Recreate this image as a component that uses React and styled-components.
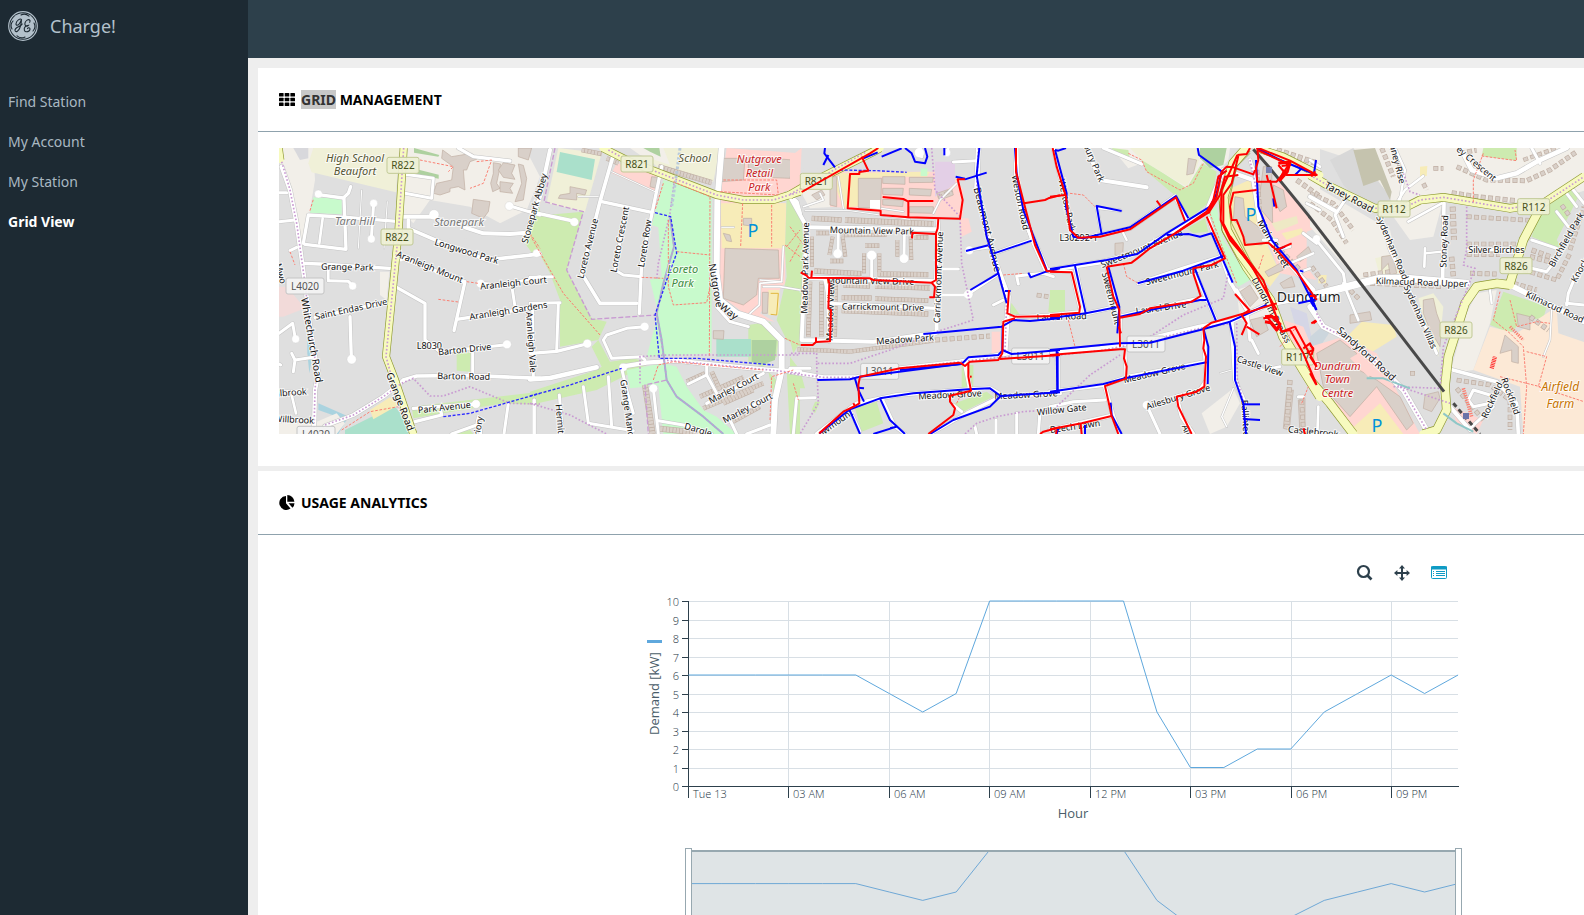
import { createGlobalStyle, styled } from 'styled-components';

const GlobalStyle = createGlobalStyle`
  * {
    box-sizing: border-box;
  }
  body {
    margin: 0;
    font-family: 'Noto Sans', 'Open Sans', sans-serif;
    font-size: 14px;
    background: #eeeeee;
  }
`;

const MENU = ['Find Station', 'My Account', 'My Station', 'Grid View'];

// Map colours
const GREY = '#dfdfdf';
const SAND = '#f2efe9';
const PARK = '#c8facc';
const GRASS = '#cdebb0';
const PITCH = '#aae0cb';
const SCHOOL = '#f0f0d8';
const RETAIL = '#ffd6d1';
const PARKING = '#f7ecb8';
const HOUSE = '#d9d0c9';
const WATER = '#aad3df';
const FOOT = '#fa8072';
const CYCLE = '#c99bd2';
const BRIDLE = '#2b2bff';

// The map is drawn in five tiles. Tile points are in thirds of a pixel, x is the tile's left edge.
const TILES = [
  {
    x: 0,
    areas: [
      [SAND, '27,24 130,24 135,120 110,270 95,300 60,160 27,60'],
      [SAND, '385,24 765,24 810,110 770,210 690,250 480,180 430,250 400,220'],
      [GREY, '440,250 480,180 600,200 700,255 770,215 775,290 430,300'],
      [SCHOOL, '130,24 388,24 378,157 125,97 115,70'],
      ['#d8d8dc', '70,24 115,24 115,55 90,60'],
      [PARK, '130,172 215,176 215,223 120,218'],
      ['#aed1a0', '432,24 508,45 505,50 432,38'],
      ['#aed1a0', '440,88 506,104 506,116 440,103'],
      ['#f2dad9', '27,440 50,440 105,505 40,530 27,530'],
      [WATER, '112,520 120,550 125,660 118,700 112,640'],
      [WATER, '145,790 225,825 235,830 205,882 195,882 215,835 145,810'],
      [GRASS, '775,270 810,200 810,345 790,345 765,310'],
      [GRASS, '560,638 603,638 600,695 560,692'],
      [GRASS, '425,800 810,755 810,795 700,790 430,835'],
      [SAND, '27,850 130,850 200,820 225,850 200,882 27,882'],
      [PITCH, '225,870 305,830 375,800 415,850 415,882 225,882'],
      [PARKING, '300,810 360,772 385,795 310,838'],
      [SAND, '330,395 358,395 350,480 330,465'],
      [GRASS, '540,882 600,870 610,882'],
      [HOUSE, '518,30 545,50 605,40 620,58 600,65 590,90 580,90 585,150 565,140 540,145 540,155 510,165 490,160 500,130 545,120 550,80 515,55'],
      [HOUSE, '670,68 692,72 680,130 690,145 668,155 662,130 670,100'],
      [HOUSE, '745,72 760,76 770,115 760,180 735,185 755,130'],
      [HOUSE, '700,68 735,75 725,100 735,118 700,112 685,90'],
      [HOUSE, '690,125 730,130 720,145 728,160 690,155'],
      [HOUSE, '745,24 785,24 775,60 745,50'],
      [HOUSE, '610,178 660,185 655,215 640,235 605,220'],
    ],
    roads: [
      [13, '35,80 60,150 80,250 105,430 120,560 135,650 145,700 135,750 132,870'],
      [9, '27,158 50,158'], [9, '27,245 75,240'], [9, '60,332 80,322'],
      [10, '100,310 115,225 230,232 390,245'],
      [10, '145,164 220,174 235,160 242,140'], [10, '222,176 228,328 105,313'], [8, '158,235 148,310'],
      [3, '275,150 265,325'], [3, '352,185 342,325'],
      [9, '311,190 304,296'],
      [10, '100,370 150,372 360,385'], [8, '175,390 175,422'], [9, '175,422 235,424 248,437'],
      [10, '135,532 355,485'], [10, '240,530 244,655'],
      [9, '27,580 68,550 76,596'], [9, '130,652 75,660 70,695'], [9, '75,660 65,640'],
      [9, '27,672 32,675'], [10, '30,757 105,752'], [8, '65,765 78,820'], [9, '27,838 120,840'],
      [9, '400,102 490,115 485,175 405,160'],
      [12, '400,230 490,230'], [12, '585,262 640,280 720,282 770,278'],
      [11, '415,240 415,265 520,310 650,360 810,342'],
      [9, '720,198 810,225'],
      [11, '385,350 580,425'], [10, '585,425 552,572'], [10, '560,538 810,500'],
      [10, '380,442 465,490 465,600 510,635'], [9, '630,430 700,435 810,410'], [9, '725,435 735,500'],
      [9, '510,635 710,614'], [11, '400,720 440,708 600,706 810,715'],
      [9, '608,638 608,700'], [9, '788,505 790,710'],
      [10, '430,805 620,792'], [10, '435,845 515,825 512,812'], [9, '715,790 702,882'], [9, '793,780 793,882'],
      [9, '545,882 620,855 625,830'], [9, '630,850 632,882'],
      [10, '565,24 610,50 720,63'],
      [12, '165,858 250,825 340,770 400,722'],
    ],
    main: [
      [20, '401,24 385,280 348,650 375,720 430,882'],
      [18, '27,24 32,60'],
    ],
    paths: [
      [CYCLE, 5, '5 6', '35,65 60,150 80,250 105,430 120,560 140,690 135,750 132,870'],
      [CYCLE, 5, '5 6', '401,24 385,280 348,650 362,700'],
      [CYCLE, 5, '5 6', '165,855 250,825 340,770 395,730 430,715 480,768 520,768 600,740 720,790 810,792'],
      [FOOT, 3, '8 5', '120,212 130,178'], [FOOT, 3, '8 5', '60,335 75,375'],
      [FOOT, 3, '8 5', '450,60 550,80 535,95'], [FOOT, 3, '8 5', '505,478 565,486'],
      [FOOT, 3, '8 5', '590,425 625,430'], [FOOT, 3, '8 5', '620,65 665,60 640,130 600,145'],
      [FOOT, 3, '8 5', '780,280 810,325'], [FOOT, 3, '8 5', '215,870 300,815 385,800 410,840'],
      [BRIDLE, 4, '9 5', '520,830 600,820 810,760'],
    ],
    circles: [[145, 162, 11], [311, 190, 11], [304, 297, 11], [248, 438, 11], [245, 658, 13], [77, 597, 11], [718, 198, 12], [492, 224, 14], [632, 431, 12], [711, 613, 12], [618, 792, 12], [390, 352, 12]],
    shields: [
      [399, 76, 'R822', 'R'], [381, 291, 'R822', 'R'], [105, 438, 'L4020', 'L'], [138, 883, 'L4020', 'L'],
    ],
    labels: [
      [255, 51, 'High School', 0, 'area'], [255, 92, 'Beaufort', 0, 'area'],
      [255, 240, 'Tara Hill', 0, 'place'], [567, 244, 'Stonepark', 0, 'place'],
      [590, 333, 'Longwood Park', 17, 'street'], [480, 380, 'Aranleigh Mount', 22, 'street'],
      [232, 380, 'Grange Park', 1, 'street'], [243, 506, 'Saint Endas Drive', -12, 'street'],
      [730, 428, 'Aranleigh Court', -6, 'street'], [715, 511, 'Aranleigh Gardens', -9, 'street'],
      [127, 600, 'Whitechurch Road', 80, 'big'], [478, 617, 'L8030', 0, 'street'],
      [584, 627, 'Barton Drive', -6, 'street'], [581, 708, 'Barton Road', 1, 'street'],
      [392, 784, 'Grange Road', 69, 'big'], [523, 801, 'Park Avenue', -6, 'street'],
      [785, 607, 'Aranleigh Vale', 86, 'street'], [792, 205, 'Stonepark Abbey', -74, 'street'],
      [66, 756, 'llbrook', -4, 'street'], [72, 838, 'Willbrook', 3, 'street'],
      [33, 400, 'Mwo', 75, 'street'], [624, 858, 'riory', -80, 'street'],
    ],
  },
  {
    x: 780,
    areas: [
      [GRASS, '45,225 160,215 110,390 185,535 230,545 205,600 90,620 90,480 60,400 0,290 20,225'],
      [GRASS, '0,755 200,690 215,680 185,620 205,600 240,665 310,655 360,670 200,750 0,795'],
      [SCHOOL, '85,24 215,40 165,215 50,190'],
      [PITCH, '90,36 195,58 185,120 80,96'],
      [RETAIL, '260,70 380,90 375,155 245,100'],
      [SCHOOL, '325,24 570,24 550,125 380,80 '],
      [SAND, '300,24 400,24 420,75 330,45'],
      ['#aed1a0', '340,24 388,24 392,50 360,35'],
      [PARK, '400,120 545,160 545,640 350,650 385,520 360,420 395,410 385,262 365,255 380,200'],
      [RETAIL, '590,24 810,40 810,150 760,160 720,180 570,165'],
      [RETAIL, '570,180 768,190 765,430 690,520 735,545 655,530 570,465'],
      [PARKING, '572,190 768,190 765,325 575,325'],
      [PARKING, '715,450 748,450 748,525 715,525'],
      [GRASS, '770,165 810,200 810,620 770,600 740,540 770,410 765,330'],
      [GRASS, '655,555 720,545 745,600 740,650 700,680 655,665'],
      ['#aed1a0', '665,600 740,600 735,660 700,672 665,665'],
      [PITCH, '559,597 663,597 663,650 559,650'],
      [PARK, '290,690 400,670 405,735 300,745'],
      [PARK, '400,670 440,680 470,740 520,810 560,830 620,882 400,882 385,735'],
      [GRASS, '715,695 745,725 740,780 725,740'],
      [GRASS, '770,690 810,690 810,882 780,882'],
      [HOUSE, '585,325 745,330 748,415 685,415 680,465 640,495 580,475'],
      [HOUSE, '640,235 665,235 665,258 640,255'],
      [HOUSE, '580,280 600,285 605,305 590,302'],
      [HOUSE, '655,50 790,60 780,115 655,110'],
      [HOUSE, '575,55 645,55 640,120 575,125'],
      [HOUSE, '697,457 715,457 712,520 697,520'],
      [HOUSE, '550,572 582,572 580,598 550,596'],
      [HOUSE, '120,140 170,150 165,165 140,160 140,180 85,175 90,165 120,160'],
      [HOUSE, '365,110 382,112 378,145 360,140'],
    ],
    roads: [
      [12, '60,30 30,170 0,250'], [10, '0,215 130,243'], [9, '0,345 20,340'], [9, '0,412 68,410'], [9, '0,490 90,488'],
      [9, '85,490 80,630'], [10, '0,640 80,634 170,612'],
      [11, '250,45 210,185 155,400 210,490 320,490'], [10, '215,185 365,217'],
      [10, '395,80 335,370 328,520'], [9, '285,220 255,390 280,405 335,410'],
      [9, '345,560 290,565 230,585 220,600 245,655 335,650 345,660'],
      [14, '0,718 60,714 200,682'], [13, '275,680 350,668 440,662 560,675 720,690 810,695'],
      [18, '575,24 562,180 560,400 570,480 620,520 700,545 755,600 755,690 735,780 730,882'],
      [9, '560,500 600,545 655,560'],
      [12, '770,160 800,185 810,220'],
      [9, '275,685 290,750 310,820'], [9, '88,765 95,850'], [9, '160,740 175,850 310,872'], [9, '235,710 245,860'],
      [9, '370,745 385,882'], [9, '385,842 460,855 545,882'],
      [9, '475,732 530,705 560,760'], [9, '530,670 530,705'], [9, '530,790 700,700'], [9, '590,835 720,770'],
      [9, '600,840 620,882'], [9, '650,882 720,855'],
      [3, '145,170 205,170'], [3, '245,95 375,155'], [4, '690,420 755,425'], [5, '700,440 750,440 810,450'],
      [3, '575,262 612,262'],
      [9, '12,780 12,882'],
      [5, '760,320 755,425 690,430 688,495 660,520'],
    ],
    main: [[20, '218,24 300,65 430,115 560,165 640,180 730,180 810,155']],
    paths: [
      [CYCLE, 5, '5 6', '235,30 300,65 430,115 560,165 640,180 730,180 810,155'],
      [CYCLE, 4, '15 6', '75,24 42,185 160,215 110,390 185,538 380,525 400,640 410,720 345,735 355,882'],
      [CYCLE, 5, '5 6', '432,130 420,220 385,370 380,420'],
      [CYCLE, 5, '5 6', '330,730 330,650 410,645 810,645'],
      [CYCLE, 5, '5 6', '400,660 560,675 720,690 810,700'],
      [CYCLE, 5, '5 6', '0,790 120,825 230,882'],
      ['#a3b3d0', 6, '0', '420,230 432,320 400,430 380,520 395,600 410,720 440,770 520,830 580,882'],
      [CYCLE, 4, '5 6', '420,230 432,320 400,430 380,520 395,600 410,720 440,770 520,830 580,882'],
      ['#b9c9d9', 9, '8 6', '450,24 440,100 425,200'],
      [FOOT, 3, '8 4', '430,125 540,170 538,650'], [FOOT, 3, '8 4', '415,240 415,440 430,495 530,488 540,440'],
      [FOOT, 3, '8 4', '440,335 540,345'], [FOOT, 3, '8 4', '335,412 400,415'],
      [FOOT, 3, '8 4', '0,285 100,460 210,585'], [FOOT, 3, '8 4', '400,130 375,210'],
      [FOOT, 3, '8 4', '370,720 385,675 430,665 700,690'], [FOOT, 3, '8 4', '725,195 725,320'], [FOOT, 3, '8 4', '638,190 632,318'],
      [FOOT, 3, '8 4', '580,120 740,120 745,165 570,155'], [FOOT, 3, '8 4', '765,315 810,350'], [FOOT, 3, '8 4', '770,320 810,270'],
      [FOOT, 3, '8 4', '765,595 810,615'], [FOOT, 3, '8 4', '720,840 725,710 790,690'],
      [BRIDLE, 4, '9 5', '375,218 422,230 440,340 410,420 375,525 388,655 500,655 730,675'],
      [BRIDLE, 4, '9 5', '0,768 120,735 275,685'],
      ['#e0b63d', 3, '0', '722,460 745,460 740,525 722,523'],
    ],
    houses: [
      [14, '155,30 215,42'], [14, '230,55 265,70'], [16, '385,80 545,128'],
      [14, '470,725 525,700'], [14, '510,770 640,712'], [14, '520,805 700,730'], [14, '580,790 670,750'], [14, '600,850 690,800'],
      [18, '345,735 368,882'], [18, '390,866 520,880'], [14, '545,695 570,750'],
    ],
    circles: [[133, 246, 12], [20, 340, 11], [344, 560, 12], [172, 611, 12], [280, 682, 11], [370, 745, 12]],
    shields: [[321, 72, 'R821', 'R']],
    labels: [
      [494, 52, 'School', 0, 'area'],
      [688, 56, 'Nutgrove', 0, 'shop'], [688, 97, 'Retail', 0, 'shop'], [688, 138, 'Park', 0, 'shop'],
      [458, 385, 'Loreto', 0, 'park'], [458, 426, 'Park', 0, 'park'],
      [172, 325, 'Loreto Avenue', -76, 'street'], [268, 298, 'Loreto Crescent', -79, 'street'],
      [343, 310, 'Loreto Row', -81, 'street'],
      [559, 436, 'Nutgrove', 80, 'big'], [598, 513, 'Way', 38, 'big'],
      [610, 744, 'Marley Court', -28, 'street'], [652, 803, 'Marley Court', -28, 'street'],
      [294, 810, 'Grange Manor', 82, 'street'], [93, 860, 'Hermitage', 85, 'street'],
      [505, 868, 'Dargle', 16, 'street'],
      [669, 271, 'P', 0, 'parking'],
    ],
  },
  {
    x: 1560,
    areas: [
      [GREY, '30,24 120,24 70,110 40,90'],
      [RETAIL, '0,50 35,24 30,130 0,150'],
      [GRASS, '0,175 35,250 45,330 35,600 10,640 0,600'],
      [SAND, '30,130 130,110 140,200 60,205 40,170'],
      [RETAIL, '130,95 440,95 440,70 500,120 520,150 520,230 350,230 180,205 120,200'],
      [PARKING, '140,100 420,95 410,110 270,110 260,190 160,205 140,150'],
      ['#e3cfe6', '435,65 495,65 495,130 470,150 435,170'],
      [RETAIL, '510,235 535,235 545,275 515,290'],
      [PARK, '392,85 412,85 412,108 392,108'],
      [HOUSE, '205,115 275,115 272,205 205,203'],
      ['#ffffff', '240,180 270,180 270,208 240,205'],
      [HOUSE, '278,110 345,110 345,133 278,130'], [HOUSE, '358,112 430,112 428,127 358,128'],
      [HOUSE, '278,145 340,145 338,166 278,163'], [HOUSE, '358,145 425,148 422,168 358,165'],
      [HOUSE, '278,178 340,180 338,200 278,195'], [HOUSE, '358,200 430,200 430,220 358,218'],
      [HOUSE, '120,110 140,110 140,200 120,195'], [HOUSE, '65,165 95,150 105,165 80,180'],
      [HOUSE, '440,160 485,145 490,165 450,180'],
      [RETAIL, '605,575 630,575 630,640 605,640'],
      [GRASS, '0,650 30,690 45,745 0,745'],
      [GRASS, '515,675 550,675 550,750 515,745'],
      [GRASS, '195,805 260,785 280,850 215,875'],
      [GRASS, '495,790 590,755 610,770 510,820'],
      [GRASS, '655,495 665,490 690,525 655,520'], [GRASS, '780,460 810,450 810,525 775,515'],
      [GRASS, '75,785 90,785 75,820 65,810'],
    ],
    roads: [
      [12, '0,170 50,260 35,600 250,605 440,578'],
      [12, '50,262 440,268'], [9, '145,270 144,340'], [9, '343,275 342,355'], [9, '245,345 245,415'],
      [14, '50,413 440,425'], [10, '105,420 120,490 440,505'], [9, '110,420 118,605'],
      [12, '445,240 438,420 440,575'], [9, '445,387 505,387'], [9, '445,465 535,465'],
      [3, '45,212 180,212 360,238'],
      [15, '565,24 560,150 610,350 655,470 645,640'],
      [9, '490,66 560,62'], [8, '475,24 470,40'], [10, '390,24 395,50'],
      [10, '612,340 725,300'], [9, '540,330 600,320'], [8, '610,495 640,480'], [9, '545,455 620,405'],
      [15, '678,24 680,130 700,230 770,390'], [9, '715,270 725,300 765,390'],
      [9, '685,432 680,408 760,400 790,410'],
      [13, '0,695 100,712 200,712 330,685 510,665 650,640 810,640'],
      [13, '525,670 540,745'],
      [12, '80,882 200,790 320,765 540,748 600,745 640,768 810,760'],
      [10, '275,775 315,860 345,882'], [10, '420,882 530,820 630,770'], [9, '180,810 210,875'], [9, '490,795 515,815'],
      [10, '640,545 680,530 810,525'], [9, '640,640 810,630'], [9, '805,635 805,760'],
      [9, '10,882 20,775 75,773'], [9, '0,685 60,685'],
      [9, '618,840 618,882'], [9, '680,820 680,882'], [9, '750,815 745,882'], [9, '555,860 560,882'],
      [5, '430,220 450,180 500,130'], [4, '145,110 160,205'], [4, '275,205 340,215'],
      [5, '40,200 100,180 90,160'],
    ],
    main: [[22, '0,165 60,130 250,35 270,24']],
    paths: [
      [CYCLE, 5, '5 6', '0,163 60,130 230,35'],
      [CYCLE, 5, '5 6', '425,24 435,150 510,230 515,370 550,540 440,575 300,630 180,670 80,670 80,640 0,640'],
      [CYCLE, 5, '5 6', '80,670 85,790 30,882'],
      [CYCLE, 5, '5 6', '0,700 100,712 200,712 330,685 510,665 650,650 810,650'],
      [CYCLE, 5, '5 6', '565,24 560,150 610,350 650,480 645,640'],
      [CYCLE, 5, '5 6', '525,882 560,850 620,830 700,815 810,808'],
      [FOOT, 3, '8 4', '0,260 45,320'], [FOOT, 3, '8 4', '0,365 30,310'], [FOOT, 3, '8 4', '10,730 25,780'],
      [FOOT, 3, '8 4', '500,790 515,760'], [FOOT, 3, '8 4', '640,405 700,400'],
      [BRIDLE, 4, '9 5', '150,90 260,92 350,97'],
    ],
    houses: [
      [16, '65,235 155,240'], [18, '165,240 430,252'], [14, '78,279 118,279'], [12, '155,286 290,284'], [14, '372,292 415,292'],
      [12, '66,290 66,380'], [12, '128,290 118,345'], [12, '158,290 166,350'], [14, '120,363 160,363'],
      [14, '225,317 268,317'], [12, '222,340 222,400'], [12, '268,340 268,400'],
      [12, '322,300 322,350'], [12, '362,290 364,360'], [16, '73,393 215,401'], [16, '262,402 415,404'],
      [16, '160,435 240,438'], [16, '255,438 420,444'], [16, '155,473 245,474'], [14, '255,476 415,482'], [16, '155,512 415,522'],
      [14, '60,425 55,590'], [14, '95,425 94,590'], [12, '138,430 135,590'],
      [13, '22,628 180,635'], [13, '180,635 430,602'],
    ],
    detached: [[15, '435,600 600,588'], [12, '445,175 485,150'], [14, '740,465 775,470']],
    circles: [[143, 341, 13], [342, 356, 13], [245, 346, 14], [535, 463, 13], [538, 331, 12], [388, 38, 14], [470, 38, 11]],
    shields: [[79, 124, 'R821', 'R'], [269, 694, 'L3011', 'L'], [722, 648, 'L3011', 'L']],
    labels: [
      [246, 271, 'Mountain View Park', 1, 'street'], [242, 422, 'Mountain View Drive', 1, 'street'],
      [279, 500, 'Carrickmount Drive', 1, 'street'], [345, 597, 'Meadow Park', -4, 'street'],
      [44, 384, 'Meadow Park Avenue', -89, 'street'], [120, 515, 'Meadow View', -88, 'street'],
      [444, 412, 'Carrickmount Avenue', -88, 'street'], [594, 268, 'Beaumont Avenue', 76, 'big'],
      [692, 187, 'Weston Road', 78, 'street'], [480, 763, 'Meadow Grove', -3, 'street'],
      [708, 763, 'Meadow Grove', -3, 'street'], [815, 808, 'Willow Gate', -6, 'street'],
      [135, 848, 'owmount', -35, 'street'], [815, 529, 'Laurel Road', -2, 'street'],
    ],
    blue: [
      '105,24 103,40 135,82', '115,45 100,75', '220,55 263,37', '275,50 335,25', '345,24 365,40 375,65 405,70 412,50 405,24',
      '463,24 463,46', '568,24 560,105 590,290 625,400 650,490', '525,118 590,98', '497,110 525,116',
      '528,333 595,316', '612,340 725,302', '541,450 625,400', '645,453 662,453',
      '400,582 635,560 670,540 720,543 810,535', '638,560 637,632 625,645 535,652 515,672 330,690',
      '82,720 180,718 210,710 510,672', '195,716 205,750 222,785', '203,743 222,745',
      '88,880 180,808 270,775 370,760 535,748 600,745 632,768 810,757', '270,775 300,840 345,882', '300,865 320,860 250,882',
      '178,808 210,882', '632,768 600,800 490,840 420,882', '637,630 665,642 810,630', '803,635 803,755',
      '675,24 680,100 700,210 770,390', '715,398 722,412 768,395 810,385',
    ],
    red: [
      '35,156 240,40 265,24', '215,50 235,92 208,96 208,102 180,102 173,205 272,212 272,225 355,232 510,236 518,180 503,118 525,118',
      '278,171 340,177 355,185 355,232', '355,183 430,183', '445,236 443,265 437,282 367,278 366,295',
      '438,282 438,420 425,428 435,440 432,472 418,472', '32,397 50,407 55,413 240,415 250,420 425,428', '66,392 64,412',
      '113,413 118,430 115,505 123,510 120,604 78,606 68,615 32,615', '78,592 78,606',
      '510,668 330,685 210,710 205,735 208,790 195,798 190,790', '195,798 160,815 88,880',
      '657,450 652,520 675,530 810,528', '675,535 640,545 637,640 625,660 540,665 525,678 510,668', '535,672 535,710 543,752 480,767 480,785 495,805 490,825 415,882',
      '545,710 540,710', '630,657 810,645', '678,24 678,95 702,190 765,180 775,175 810,166', '702,190 735,315 770,393 810,396',
      '750,882 760,875 810,862',
    ],
  },
  {
    x: 2340,
    areas: [
      [SAND, '185,24 540,24 535,60 510,90 460,70 410,145 275,70 235,85'],
      [SCHOOL, '240,24 460,24 440,80 410,140 275,60'],
      [GRASS, '275,60 340,100 410,145 455,70 500,95 485,180 420,235 380,170 290,95'],
      [GRASS, '185,24 235,30 240,60 210,50'],
      ['#aed1a0', '450,24 530,24 520,75 480,85 450,55'],
      [HOUSE, '415,55 440,60 430,100 410,105'],
      [SAND, '620,24 810,24 810,250 700,130 640,60'],
      [RETAIL, '610,130 690,130 810,260 770,275 770,380 800,420 690,400 660,320 630,250'],
      [PARKING, '530,150 610,115 640,200 650,310 690,400 660,440 570,330 530,250'],
      [PARK, '470,215 500,200 520,300 600,420 565,440 540,400 500,300'],
      [GRASS, '410,265 465,235 475,275 430,280'],
      [SAND, '560,450 620,430 680,510 640,560 570,540'],
      [HOUSE, '555,170 580,175 585,230 625,260 650,295 635,315 590,310 570,260 550,240'],
      [HOUSE, '640,80 665,80 668,250 625,200'],
      [HOUSE, '670,135 700,150 710,200 690,215 675,180'],
      ['#eee9c5', '665,250 740,228 745,250 680,275'],
      [PARKING, '695,280 755,265 760,280 710,300'],
      [HOUSE, '690,430 725,410 735,440 700,445'],
      [HOUSE, '645,395 690,370 700,390 655,410'],
      [HOUSE, '740,350 775,320 785,340 750,365'],
      [HOUSE, '570,455 600,435 625,475 600,500'],
      [HOUSE, '600,540 640,530 655,570 620,590'],
      ['#d5d6e6', '720,500 770,520 790,620 740,570'],
      [RETAIL, '700,540 760,560 810,680 810,735 740,640'],
      [GRASS, '0,450 45,450 45,520 0,520'],
      [HOUSE, '195,310 220,308 218,350 195,345'],
      [SAND, '455,820 550,745 570,790 530,860 480,882'],
      [HOUSE, '710,755 730,750 718,870 700,865'],
      [HOUSE, '745,780 765,775 765,880 750,882'],
    ],
    roads: [
      [12, '110,24 150,120 290,142'], [10, '160,24 275,72'],
      [12, '10,24 45,170 70,290 100,295 240,265 375,170'],
      [14, '0,390 160,365 240,345 350,285 470,215 520,90'],
      [12, '375,170 415,240'], [9, '140,200 155,285'], [8, '140,203 212,212'],
      [11, '475,235 540,425 590,510'],
      [12, '170,375 210,530 208,620'], [12, '75,375 105,520'], [10, '0,395 65,395 92,515 0,525'],
      [12, '0,535 110,520 200,500'], [12, '210,530 310,505 450,475 470,480'],
      [11, '265,430 400,385 520,348'], [11, '430,385 500,545'],
      [13, '0,638 150,625 240,610 450,560 540,545 650,495 810,465'],
      [12, '0,755 160,735 235,710 470,665'], [9, '20,635 22,755'],
      [9, '225,630 228,715'], [12, '460,565 470,720 450,750 380,770'],
      [12, '545,545 555,720 585,790 588,882'],
      [9, '0,800 70,785 165,780'], [9, '290,795 330,882'], [12, '165,740 190,830 210,882'], [12, '0,870 180,828'],
      [12, '380,770 395,830 430,882'],
      [13, '540,95 610,120 630,250 680,330 790,450'], [9, '680,300 640,300'],
      [10, '560,450 590,510 600,600'], [9, '605,600 625,640'], [8, '590,670 640,690 690,680'],
      [10, '600,60 620,120'], [8, '680,330 720,320'], [9, '760,280 800,310'], [8, '780,60 810,80'],
      [7, '215,270 230,300'], [3, '510,700 545,690'], [4, '550,745 515,830 530,860'],
      [9, '745,770 760,770'],
      [7, '720,370 790,340'], [7, '740,400 780,385'],
      [8, '770,190 810,210'],
    ],
    main: [
      [26, '590,24 550,70 520,170 530,270 590,380 660,480 700,590 760,690 810,770'],
      [20, '620,24 700,50 810,105'],
    ],
    rail: ['610,28 660,85 705,140 780,232'],
    paths: [
      ['#7a8a20', 2, '0', '600,40 560,80 540,170 545,250 600,360 650,440'],
      ['#7a8a20', 2, '0', '560,60 530,110 508,190 515,270 560,350 640,460'],
      [CYCLE, 5, '5 6', '0,648 150,632 240,615 450,565 540,550'],
      [CYCLE, 5, '5 6', '20,800 120,705 210,645'], [CYCLE, 5, '5 6', '300,590 400,525 520,475 535,395'],
      [CYCLE, 5, '5 6', '560,550 562,720 585,800'], [CYCLE, 5, '5 6', '600,60 615,130 630,220'],
      [FOOT, 3, '8 4', '60,160 100,165 135,200'], [FOOT, 3, '8 4', '235,40 275,60 290,95 390,150 430,130 460,70'],
      [FOOT, 3, '8 4', '220,370 230,410 265,430'], [FOOT, 3, '8 4', '55,540 75,620'],
      [FOOT, 3, '8 4', '480,220 520,330 560,430'], [FOOT, 3, '8 4', '640,345 625,390'],
      [FOOT, 3, '8 4', '755,790 775,740'], [FOOT, 3, '8 4', '690,620 740,560'],
    ],
    detached: [[18, '680,30 800,70'], [16, '740,120 810,170'], [16, '720,720 710,860'], [14, '755,780 760,870'], [15, '690,330 760,400'], [16, '620,90 630,240']],
    circles: [[290, 795, 12]],
    shields: [[288, 612, 'L3011', 'L'], [743, 651, 'R117', 'R']],
    labels: [
      [133, 68, 'bury Park', 67, 'street'], [86, 292, 'L30292-1', 0, 'street'],
      [52, 195, 'Weston Park', 78, 'street'],
      [275, 325, 'Sweetmount Avenue', -22, 'street'], [396, 398, 'Sweetmount Park', -14, 'street'],
      [185, 475, 'Sweetmount', 76, 'street'], [333, 502, 'Laurel Drive', -8, 'street'],
      [672, 310, 'Main Street', 60, 'big'], [665, 510, 'Dundrum Bypass', 62, 'street'],
      [630, 677, 'Castle View', 18, 'street'], [313, 698, 'Meadow Grove', -13, 'street'],
      [384, 770, 'Ailesbury Grove', -17, 'street'], [588, 840, 'Ballinteer', 87, 'street'],
      [75, 858, 'Beech Lawn', -8, 'street'], [415, 882, 'Ailes', 70, 'street'],
      [790, 874, 'Castlebrook', 6, 'street'],
      [603, 222, 'P', 0, 'parking'], [776, 470, 'Dundrum', 0, 'town'],
    ],
    blue: [
      '15,30 25,32 48,24', '15,30 50,160 48,200 70,290 100,295 240,262 378,168 415,235', '155,283 140,198 215,213',
      '443,24 447,45 520,98', '0,387 170,360 262,342 350,280 480,200 500,160 515,95',
      '350,285 415,282 450,290 485,280 548,428', '75,378 107,520', '0,535 107,520 200,502',
      '175,380 200,470 208,500 202,580', '210,530 300,510 450,480 470,480', '263,430 400,392 520,348', '432,380 498,543',
      '0,630 208,610 300,608 450,570 540,545 650,495', '538,543 555,620 555,720 580,790 588,882', '580,793 630,793', '580,837 630,840',
      '20,632 22,755', '0,755 160,732 225,715 470,667', '460,565 475,620 473,732', '182,788 185,825 215,882',
      '20,882 25,865', '105,882 105,855', '620,24 690,60 800,105', '618,60 625,200 665,300 740,390 800,510', '735,105 755,85',
      '745,490 800,478', '670,175 673,200', '680,330 705,320', '750,392 760,395',
    ],
    red: [
      '8,24 20,80 48,170 60,270 85,293 150,290 240,268 378,172 405,243', '0,170 45,165', '320,182 332,198',
      '170,380 245,368 262,355 300,325 375,280 470,215 490,180 505,110 530,92', '375,280 480,215',
      '0,395 65,397 90,500 88,518 0,525', '170,380 190,470 208,510 210,620', '206,560 213,580',
      '210,533 270,522 300,505 425,485 452,468 430,400 430,385 485,375 525,355 470,230',
      '0,645 210,628 225,628 222,655 230,680 228,716 165,738 185,828 205,882', '0,868 95,850 185,828', '92,852 95,882', '20,870 18,882',
      '460,565 485,548 600,515 680,490', '460,565 463,600 460,625 468,650 463,740 440,755 380,770 385,800 425,882',
      '555,462 598,510 575,525 590,550 575,585', '590,560 628,583', '562,45 590,42 600,24',
      '562,45 540,95 515,150 512,240 540,300 600,370 680,510', '540,288 640,420 695,575', '565,48 545,130 520,165 520,250 545,300 620,400',
      '475,215 500,170 515,95 530,80 550,82 610,103 615,90', '475,220 510,165 525,110 565,105', '622,24 625,60 618,85 622,125 680,125 700,100 715,75',
      '622,30 720,75 695,78', '625,24 720,62 800,105 710,105 685,75',
      '660,120 680,205', '650,105 655,125', '620,150 550,158 540,200 545,240 560,240 580,290 585,315 655,308 680,330 725,310', '680,330 740,395 800,480',
      '640,535 680,530 695,575 735,560 800,680', '695,575 720,570 760,640 800,735', '650,530 680,565', '760,625 780,610 790,630 770,638',
      '788,468 800,470', '790,550 800,543', '760,865 765,882',
    ],
    knots: ['685,70 720,66 712,95 690,120 705,90', '645,530 665,528 690,552 680,570 662,548 645,545'],
  },
  {
    x: 3120,
    areas: [
      [SAND, '20,24 810,24 1100,24 1100,160 830,150 700,190 400,180 370,290 300,300 250,230 130,60'],
      [SAND, '0,130 240,270 270,400 150,430 0,260'],
      ['#d8d8d8', '60,60 130,24 240,170 245,200 165,205 100,135'],
      ['#c5c3ae', '130,30 195,24 245,155 240,180 210,120 160,138'],
      [GRASS, '520,24 620,24 620,62 515,48'],
      [GRASS, '690,215 780,150 810,160 740,300 760,330 665,290'],
      [GREY, '400,190 690,210 600,430 400,410'],
      [GREY, '740,330 1100,90 1100,900 822,600 740,570'],
      [SCHOOL, '195,355 260,340 270,400 210,410'],
      [SCHOOL, '325,475 370,460 400,500 385,650 360,610'],
      [SAND, '470,520 500,460 560,450 540,550 490,690 420,700'],
      [GRASS, '580,455 710,500 700,535 640,540 600,580 540,555'],
      ['#fce9d6', '540,560 620,580 740,500 745,580 1100,700 1100,882 640,882 630,740 490,690'],
      [PARKING, '110,590 155,545 250,555 260,590 180,640'],
      ['#ccd6dd', '0,590 30,565 60,575 30,620 0,640'],
      [RETAIL, '0,620 100,590 200,640 330,882 120,882'],
      [HOUSE, '20,640 90,600 140,640 130,680 200,720 270,770 310,850 290,870 200,740 120,830 40,740'],
      [RETAIL, '120,655 170,625 215,680 175,710'],
      [PARKING, '120,870 210,790 280,882 120,882'],
      [RETAIL, '425,800 520,840 500,882 440,850'],
      [HOUSE, '340,480 370,475 380,520 395,560 390,620 360,570 340,520'],
      [HOUSE, '215,350 250,345 260,400 240,405 235,370 215,390'],
      [HOUSE, '120,525 180,515 185,540 120,550'],
      [HOUSE, '620,520 660,530 660,570 625,560'], [HOUSE, '585,585 625,620 625,670 605,665 605,630 570,640'],
      [HOUSE, '345,765 385,755 390,775 365,815 340,805'],
      [PARKING, '330,80 352,78 350,108 330,108'], [PARKING, '25,405 50,405 48,430 25,430'],
    ],
    roads: [
      [7, '255,24 285,90 270,180'], [7, '265,180 285,150 340,108'], [8, '295,245 395,190'],
      [14, '460,40 485,90 560,115 620,100 680,65 770,24'], [9, '665,24 690,70'],
      [11, '402,190 398,415'], [8, '345,325 343,380'], [7, '345,340 395,335'],
      [9, '475,327 600,330'],
      [12, '0,170 80,215'], [9, '105,180 75,225 100,290'], [9, '205,215 240,330 290,430 380,640'],
      [22, '20,463 210,415 290,415 470,430'], [16, '600,435 680,475 822,545'],
      [9, '15,295 100,400 105,430'], [8, '55,450 65,480'],
      [16, '0,500 40,560 120,600 200,670 280,750 350,870'],
      [9, '665,300 740,325'], [9, '740,215 775,260'], [9, '665,385 710,395 730,370'],
      [9, '770,495 775,460 800,400 822,370'], [9, '770,490 822,495'],
      [11, '420,688 560,725 620,790 625,882'], [12, '420,800 480,870'],
      [9, '540,790 490,800 475,780 490,750 540,765'], [9, '480,865 550,800'],
      [7, '540,450 545,490'], [4, '725,510 720,600 700,650'],
      [8, '100,430 145,540'], [9, '770,160 800,200'], [9, '790,150 822,190'],
      [8, '25,800 22,882'],
    ],
    main: [
      [22, '0,105 60,140 195,205 290,200 330,180 400,172 600,205 700,190 822,110'],
      [24, '690,205 640,300 600,430'],
      [24, '600,435 560,430 500,440 465,490 415,650 405,740 410,810 380,870 340,882'],
      [24, '0,720 60,790 130,882'],
    ],
    rail: ['-2,230 402,755'],
    brokenRail: ['430,790 510,882'],
    paths: [
      [CYCLE, 5, '5 6', '0,105 60,140 195,205 290,200 330,180 400,172 600,205 700,190 822,110'],
      [CYCLE, 5, '5 6', '280,100 300,155 330,165'], [CYCLE, 5, '5 6', '470,200 470,330 460,375 495,385 470,450 400,620 390,745 250,740'],
      [CYCLE, 5, '5 6', '20,520 40,560 120,600 200,670 280,750 350,870'], [CYCLE, 5, '5 6', '270,740 420,790'],
      [FOOT, 3, '8 4', '520,40 490,120 490,190'], [FOOT, 3, '8 4', '515,48 620,62 615,30'],
      [FOOT, 3, '8 4', '570,455 550,540 600,580 640,620 650,740 640,882'], [FOOT, 3, '8 4', '650,635 710,650 685,740 822,785'],
      [FOOT, 3, '8 4', '600,480 620,560 680,545 720,550'], [FOOT, 3, '8 4', '570,710 690,740'],
      ['#f33', 13, '3 2', '545,685 555,650'], [FOOT, 9, '4 3', '600,560 640,600'], [FOOT, 11, '4 3', '460,745 485,830'],
      ['#8fc7c7', 6, '0', '170,715 220,715 300,745'], ['#8fc7c7', 6, '0', '400,820 440,850 490,875'],
    ],
    detached: [
      [15, '215,24 250,110'], [15, '245,24 265,60 280,115'], [15, '440,80 530,120 650,122 720,90 800,35'], [15, '450,40 500,30'],
      [15, '425,158 500,170 620,182'], [14, '470,230 680,242'], [14, '470,312 640,312'], [14, '470,344 570,344'],
      [18, '428,200 432,300'], [16, '425,350 430,410'], [15, '480,400 560,402'], [15, '610,430 680,450'],
      [16, '665,330 720,350'], [16, '660,350 720,365'], [14, '755,195 780,230'], [14, '640,390 740,420 780,340'], [14, '780,330 822,200'],
      [14, '0,160 70,190 130,270'], [14, '0,190 65,240 110,310'], [14, '160,405 240,395'], [14, '180,430 400,440'],
      [14, '5,380 50,440'], [14, '120,450 150,480'], [14, '440,720 540,735 600,780 600,870'], [14, '440,745 520,840'], [16, '660,530 715,570'],
      [14, '370,85 400,85'], [14, '340,130 350,150'], [13, '640,60 740,24'], [14, '300,700 320,700'],
    ],
    circles: [[20, 296, 11]],
    shields: [
      [252, 207, 'R112', 'R'], [671, 200, 'R112', 'R'], [618, 377, 'R826', 'R'], [438, 570, 'R826', 'R'],
    ],
    labels: [
      [118, 170, 'Taney Road', 28, 'big'], [264, 72, 'aney Rise', 76, 'street'],
      [500, 70, 'ey Crescent', 40, 'street'], [248, 322, 'Sydenham Road', 67, 'street'],
      [401, 304, 'Stoney Road', -88, 'street'], [559, 329, 'Silver Birches', 0, 'street'],
      [768, 298, 'Birchfield Park', -60, 'street'], [335, 426, 'Kilmacud Road Upper', 2, 'street'],
      [735, 500, 'Kilmacud Road', 25, 'street'], [808, 390, 'Knock', -60, 'street'],
      [332, 530, 'Sydenham Villas', 66, 'street'], [170, 640, 'Sandyford Road', 42, 'big'],
      [545, 780, 'Rockfield', -65, 'street'], [603, 768, 'Rockfield', 70, 'street'],
      [82, 675, 'Dundrum', 0, 'shop'], [82, 716, 'Town', 0, 'shop'], [82, 757, 'Centre', 0, 'shop'],
      [751, 740, 'Airfield', 0, 'farm'], [751, 790, 'Farm', 0, 'farm'], [201, 855, 'P', 0, 'parking'],
    ],
    blue: ['18,60 12,100', '0,455 18,510', '0,480 12,500'],
    red: ['0,95 18,108', '4,110 16,94', '0,468 16,468', '4,550 18,541', '0,615 10,625 5,645', '0,650 20,680', '0,700 18,733'],
  },
];

const LABEL_STYLES = {
  street: { size: 9, fill: '#111' },
  big: { size: 10, fill: '#111' },
  area: { size: 11, fill: '#555533', italic: true },
  place: { size: 11, fill: '#777', italic: true },
  park: { size: 11, fill: '#3d8b40', italic: true },
  shop: { size: 11, fill: '#c9211e', italic: true },
  farm: { size: 12, fill: '#c77400', italic: true },
  parking: { size: 18, fill: '#0092da' },
  town: { size: 14, fill: '#222' },
};

function Layer({ children }) {
  return TILES.map((tile) => (
    <g key={tile.x} transform={`scale(0.333333) translate(${tile.x} 0)`}>
      {children(tile)}
    </g>
  ));
}

const lines = (list, props) => list.map((points, i) => <polyline key={i} points={points} {...props} />);
const stroked = (list, props, grow = 0) =>
  list.map(([width, points], i) => <polyline key={i} points={points} strokeWidth={width + grow} {...props} />);

function GridMap() {
  return (
    <MapSvg viewBox="9 8 1305 286" preserveAspectRatio="xMinYMid slice" role="img" aria-label="Grid map of Dundrum">
      <rect x="9" y="8" width="1600" height="286" fill={GREY} />
      <Layer>
        {(t) =>
          t.areas.map(([fill, points], i) => (
            <polygon key={i} points={points} fill={fill} stroke={fill === HOUSE ? '#bfaea2' : 'none'} strokeWidth="2" />
          ))
        }
      </Layer>
      <MapLines>
        <Layer>
          {(t) => (
            <>
              {stroked(t.houses || [], { stroke: '#bfaea2' })}
              {stroked(t.houses || [], { stroke: HOUSE, strokeDasharray: '8 2' }, -3)}
              {stroked(t.detached || [], { stroke: '#c0afa3', strokeDasharray: '15 7' })}
              {stroked(t.detached || [], { stroke: HOUSE, strokeDasharray: '11 11', strokeDashoffset: -2 }, -4)}
            </>
          )}
        </Layer>
        <Layer>
          {(t) => (
            <>
              {stroked(t.roads, { stroke: '#c4c4c4', strokeLinecap: 'round' }, 3)}
              {t.circles.map(([x, y, r], i) => (
                <circle key={i} cx={x} cy={y} r={r + 1} fill="#fff" stroke="#c8c8c8" strokeWidth="1" />
              ))}
            </>
          )}
        </Layer>
        <Layer>{(t) => stroked(t.roads, { stroke: '#fff', strokeLinecap: 'round' })}</Layer>
        <Layer>{(t) => stroked(t.main, { stroke: '#8f9a32' }, 4)}</Layer>
        <Layer>{(t) => stroked(t.main, { stroke: '#f7fabf', strokeLinecap: 'round' })}</Layer>
        <Layer>
          {(t) =>
            t.paths.map(([stroke, width, dash, points], i) => (
              <polyline key={i} points={points} stroke={stroke} strokeWidth={width} strokeDasharray={dash} />
            ))
          }
        </Layer>
        <Layer>{(t) => lines(t.rail || [], { stroke: '#494949', strokeWidth: 9 })}</Layer>
        <Layer>{(t) => lines(t.brokenRail || [], { stroke: '#494949', strokeWidth: 9, strokeDasharray: '14 10' })}</Layer>
        <rect x="996" y="27" width="6" height="6" fill="#7981b0" />
        <rect x="1193" y="273" width="6" height="6" fill="#6a73a8" />
      </MapLines>
      {TILES.map((t) =>
        t.labels.map(([x, y, text, angle, kind]) => {
          const style = LABEL_STYLES[kind];
          const cx = (t.x + x) / 3;
          const cy = y / 3;
          return (
            <MapLabel
              key={`${text}${x}${y}`}
              x={cx}
              y={cy}
              transform={`rotate(${angle} ${cx} ${cy})`}
              $size={style.size}
              $italic={style.italic}
              $plain={kind === 'parking'}
              fill={style.fill}
            >
              {text}
            </MapLabel>
          );
        }),
      )}
      {TILES.map((t) =>
        t.shields.map(([x, y, text, kind]) => (
          <g key={`${x}${y}`} transform={`translate(${(t.x + x) / 3} ${y / 3})`}>
            <rect
              x={kind === 'R' ? -16 : -19}
              y="-8"
              width={kind === 'R' ? 32 : 38}
              height="16"
              rx="2"
              fill={kind === 'R' ? '#eef0d5' : '#f3f3f3'}
              fillOpacity="0.92"
              stroke={kind === 'R' ? '#c1c995' : '#c4c4c4'}
            />
            <ShieldText fill={kind === 'R' ? '#46501a' : '#555'}>{text}</ShieldText>
          </g>
        )),
      )}
      <MapLines>
        <Layer>{(t) => lines(t.blue || [], { stroke: '#0000ff', strokeWidth: 6 })}</Layer>
        <Layer>{(t) => lines(t.red || [], { stroke: '#ff0000', strokeWidth: 6 })}</Layer>
        <Layer>{(t) => lines(t.knots || [], { stroke: '#ff0000', strokeWidth: 9 })}</Layer>
      </MapLines>
    </MapSvg>
  );
}

const DEMAND = [6, 6, 6, 6, 6, 6, 5, 4, 5, 10, 10, 10, 10, 10, 4, 1, 1, 2, 2, 4, 5, 6, 5, 6];
const TICKS = [
  [48, 'Tue 13'], [148, '03 AM'], [249, '06 AM'], [349, '09 AM'],
  [450, '12 PM'], [550, '03 PM'], [651, '06 PM'], [751, '09 PM'],
];
const seriesPoints = (zero, step) => DEMAND.map((v, i) => `${48.5 + i * 33.46},${zero - v * step}`).join(' ');

function DemandChart() {
  return (
    <ChartSvg viewBox="0 0 824 361" role="img" aria-label="Demand by hour">
      {Array.from({ length: 11 }, (_, v) => {
        const y = Math.round(196 - v * 18.5) + 0.5;
        return (
          <g key={v}>
            {v > 0 && <line x1="48" x2="818" y1={y} y2={y} stroke="#d8dfe5" />}
            <line x1="42" x2="48" y1={y} y2={y} stroke="#2d404c" />
            <ChartText x="39" y={y + 4} textAnchor="end">{v}</ChartText>
          </g>
        );
      })}
      {TICKS.map(([x, text]) => (
        <g key={text}>
          <line x1={x + 0.5} x2={x + 0.5} y1="11" y2="196" stroke="#d8dfe5" />
          <line x1={x + 0.5} x2={x + 0.5} y1="196" y2="208" stroke="#2d404c" />
          <ChartText x={x + 5} y="208">{text}</ChartText>
        </g>
      ))}
      <path d="M48.5 11V196.5H819" fill="none" stroke="#2d404c" />
      <polyline points={seriesPoints(196, 18.5)} fill="none" stroke="#5fa8dd" />
      <ChartText x="433" y="228" textAnchor="middle" $title>Hour</ChartText>
      <rect x="7" y="50" width="15" height="3" fill="#5fa8dd" />
      <ChartText transform="translate(19 145) rotate(-90)" $title>Demand [kW]</ChartText>
      <rect x="48" y="260" width="771" height="85" fill="#dfe4e6" />
      <line x1="48" x2="819" y1="261" y2="261" stroke="#97a8b0" strokeWidth="2" />
      <svg x="48" y="262" width="771" height="90" viewBox="48 262 771 90">
        <polyline points={seriesPoints(344, 8.4)} fill="none" stroke="#6fa8d6" />
      </svg>
      <rect x="45.5" y="258.5" width="6" height="90" fill="#fff" stroke="#97a8b0" />
      <rect x="815.5" y="258.5" width="6" height="90" fill="#fff" stroke="#97a8b0" />
    </ChartSvg>
  );
}

function GELogo() {
  return (
    <svg width="30" height="30" viewBox="0 0 30 30" fill="none" aria-hidden="true">
      <circle cx="15" cy="15" r="14.3" stroke="#b3c1cb" strokeWidth="1.2" />
      <circle cx="15" cy="15" r="12.8" fill="#b3c1cb" />
      <g stroke="#1d2a33" strokeWidth="1.1" strokeLinecap="round">
        <path d="M13 4c3-1.700 6-.6 8 1.100M26 12c1.700 3 .8 6-1 8M17 26c-3 1.700-6 .6-8-1.100M4 18c-1.700-3-.8-6 1-8" />
        <path d="M13.500 8.500c-1.300-1.500-5.200 1-5.500 4.200-.2 2.300 2.200 2.100 3.700-.5.900-1.500 1.500-3 1.800-3.700-.1 4-1.400 10.600-4.400 11.900-2 .8-2.900-1.200-1.300-2.900 2-2.100 5.200-2.100 6.400-4.400" />
        <path d="M21.700 11.300c1.200-2-.6-3.400-2.600-2.200-2.200 1.300-3.200 4.600-1.200 5.700 1 .5 2.300.1 2.700-.5-3 .2-5 2.600-4.200 5 1 2.800 5.700 1.200 5.600-1.400-.1-1.400-1.900-1.600-2.500-.3" />
      </g>
    </svg>
  );
}

function GridIcon() {
  return (
    <svg width="16" height="13" viewBox="0 0 16 13" aria-hidden="true">
      {[0, 4.75, 9.5].map((y) => [0, 5.7, 11.4].map((x) => (
        <rect key={`${x}${y}`} x={x} y={y} width="4.600" height="3.500" rx="0.600" />
      )))}
    </svg>
  );
}

function PieIcon() {
  return (
    <svg width="16" height="16" viewBox="0 0 16 16" aria-hidden="true">
      <path d="M7 1v7.200l4.500 5.400A7 7 0 1 1 7 1z" />
      <path d="M8.300 0A7.300 7.300 0 0 1 15.400 6.800H8.300z" />
      <path d="M9.500 8.200h6a7 7 0 0 1-2 4.500z" />
    </svg>
  );
}

function App() {
  return (
    <>
      <GlobalStyle />
      <Shell>
        <Sidebar>
          <Brand>
            <GELogo />
            <span>Charge!</span>
          </Brand>
          <Menu>
            {MENU.map((item) => (
              <MenuLink key={item} href="#" $active={item === 'Grid View'}>
                {item}
              </MenuLink>
            ))}
          </Menu>
        </Sidebar>
        <Main>
          <TopBar />
          <Panels>
            <Panel>
              <PanelHeader>
                <GridIcon />
                <PanelTitle><mark>GRID</mark> MANAGEMENT</PanelTitle>
              </PanelHeader>
              <MapBody>
                <GridMap />
              </MapBody>
            </Panel>
            <Panel>
              <PanelHeader>
                <PieIcon />
                <PanelTitle>USAGE ANALYTICS</PanelTitle>
              </PanelHeader>
              <ChartBody>
                <ChartTools>
                  <ToolButton aria-label="Zoom">
                    <svg width="17" height="17" viewBox="0 0 17 17" fill="none" stroke="currentColor">
                      <circle cx="7.500" cy="7.500" r="5.500" strokeWidth="2.200" />
                      <path d="M11.500 11.500l4 4" strokeWidth="2.600" />
                    </svg>
                  </ToolButton>
                  <ToolButton aria-label="Pan">
                    <svg width="16" height="16" viewBox="0 0 16 16" fill="currentColor">
                      <path d="M8 0l3 3.400H9V7h3.600V5L16 8l-3.400 3V9H9v3.600h2L8 16l-3-3.400h2V9H3.400v2L0 8l3.400-3v2H7V3.400H5z" />
                    </svg>
                  </ToolButton>
                  <ToolButton aria-label="Legend" $active>
                    <svg width="16" height="13" viewBox="0 0 16 13" fill="none" stroke="currentColor">
                      <rect x="0.500" y="0.500" width="15" height="12" rx="1" />
                      <path d="M0 2h16" strokeWidth="3" />
                      <path d="M2 5.500h1M5 5.500h9M2 7.500h1M5 7.500h9M2 9.500h1M5 9.500h9" />
                    </svg>
                  </ToolButton>
                </ChartTools>
                <DemandChart />
              </ChartBody>
            </Panel>
          </Panels>
        </Main>
      </Shell>
    </>
  );
}
export default App;

const Shell = styled.div`
  display: flex;
  height: 100vh;
  overflow: hidden;
`;

const Sidebar = styled.aside`
  flex: 0 0 248px;
  padding: 10px 8px;
  background: #1d2a33;
  color: #b3c1cb;
`;

const Brand = styled.div`
  display: flex;
  align-items: center;
  gap: 12px;
  height: 32px;
  font-size: 18px;
`;

const Menu = styled.nav`
  display: flex;
  flex-direction: column;
  margin-top: 40px;
`;

const MenuLink = styled.a`
  height: 40px;
  line-height: 40px;
  color: ${({ $active }) => ($active ? '#ffffff' : '#a9b8c2')};
  font-weight: ${({ $active }) => ($active ? 700 : 400)};
  text-decoration: none;
`;

const Main = styled.main`
  flex: 1;
  min-width: 0;
`;

const TopBar = styled.header`
  height: 58px;
  background: #2d404b;
`;

const Panels = styled.div`
  display: flex;
  flex-direction: column;
  gap: 5px;
  padding: 10px 0 0 10px;
`;

const Panel = styled.section`
  background: #ffffff;
`;

const PanelHeader = styled.div`
  display: flex;
  align-items: center;
  gap: 6px;
  height: 64px;
  padding-left: 21px;
  border-bottom: 1px solid #8fa2ad;
`;

const PanelTitle = styled.h2`
  margin: 0;
  font-size: 14px;
  line-height: 17px;
  font-weight: 700;
  color: #000000;
  mark {
    background: #c8c8c8;
    color: #333333;
  }
`;

const MapBody = styled.div`
  padding: 16px 0 32px 21px;
`;

const MapSvg = styled.svg`
  display: block;
  width: 100%;
  height: 286px;
`;

const MapLines = styled.g`
  fill: none;
  stroke-linejoin: round;
`;

const MapLabel = styled.text`
  font-size: ${({ $size }) => $size}px;
  font-style: ${({ $italic }) => ($italic ? 'italic' : 'normal')};
  text-anchor: middle;
  dominant-baseline: central;
  paint-order: stroke;
  stroke: rgba(255, 255, 255, 0.75);
  stroke-width: ${({ $plain }) => ($plain ? 0 : 2)}px;
`;

const ShieldText = styled.text`
  font-size: 10px;
  text-anchor: middle;
  dominant-baseline: central;
`;

const ChartBody = styled.div`
  display: flex;
  flex-direction: column;
  align-items: flex-end;
  padding-right: 120px;
`;

const ChartTools = styled.div`
  display: flex;
  gap: 12px;
  height: 55px;
  padding: 25px 13px 0 0;
`;

const ToolButton = styled.button`
  display: flex;
  align-items: center;
  justify-content: center;
  width: 25px;
  height: 25px;
  padding: 0;
  border: 0;
  background: none;
  color: ${({ $active }) => ($active ? '#0f9bc4' : '#2d404c')};
`;

const ChartSvg = styled.svg`
  display: block;
  width: 824px;
  height: 361px;
`;

const ChartText = styled.text`
  font-family: 'Open Sans', 'Noto Sans', sans-serif;
  font-size: ${({ $title }) => ($title ? 13 : 11)}px;
  font-weight: ${({ $title }) => ($title ? 400 : 300)};
  fill: ${({ $title }) => ($title ? '#4a5d69' : '#23343f')};
`;
